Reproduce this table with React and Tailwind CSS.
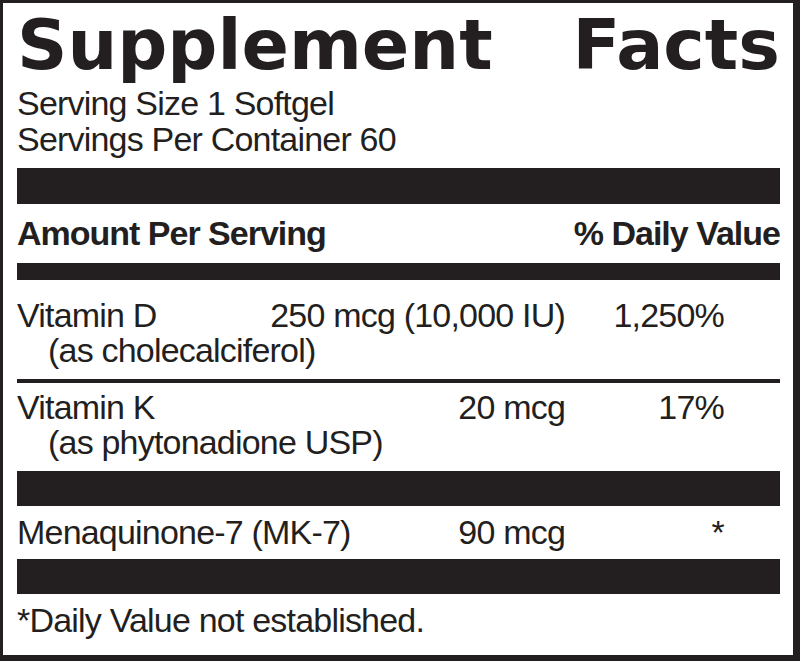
const body = { fontFamily: '"Liberation Sans", Arial, sans-serif' };
const title = { fontFamily: '"DejaVu Sans", "Liberation Sans", sans-serif' };

const Bar = ({ h }) => <div className={`bg-[#231f20] ${h}`} />;

const Row = ({ name, sub, amount, dv, className }) => (
  <div className={className}>
    <div className="flex h-[35px] items-center leading-[35px]">
      <div className="flex-1">{name}</div>
      <div className="text-right">{amount}</div>
      <div className="w-[159px] text-right">{dv}</div>
      <div className="w-[56px]" />
    </div>
    {sub ? <div className="h-[35px] pl-[31px] leading-[35px]">{sub}</div> : null}
  </div>
);

export default function App() {
  return (
    <div className="h-[661px] w-[800px] bg-[#231f20] pb-[6px] pl-[3px] pr-[7px] pt-[3px]">
      <div className="flex h-full flex-col bg-white pl-[14px] pr-[13px] text-[34px] tracking-[-0.8px] text-[#231f20]" style={body}>
        <div className="mt-[7px] flex h-[70px] justify-between text-[70px] font-bold leading-[70px] tracking-normal" style={title}>
          <span>Supplement</span>
          <span>Facts</span>
        </div>
        <div className="mt-[5px] h-[36px] leading-[36px]">Serving Size 1 Softgel</div>
        <div className="h-[36px] leading-[36px]">Servings Per Container 60</div>
        <div className="mt-[11px]">
          <Bar h="h-[36px]" />
        </div>
        <div className="flex h-[59px] items-center justify-between font-bold leading-[59px] tracking-[-1px]">
          <span>Amount Per Serving</span>
          <span>% Daily Value</span>
        </div>
        <Bar h="h-[17px]" />
        <Row
          className="pt-[18px] pb-[11px]"
          name="Vitamin D"
          sub="(as cholecalciferol)"
          amount="250 mcg (10,000 IU)"
          dv="1,250%"
        />
        <Bar h="h-[4px]" />
        <Row
          className="pt-[7px] pb-[11px]"
          name="Vitamin K"
          sub="(as phytonadione USP)"
          amount="20 mcg"
          dv="17%"
        />
        <Bar h="h-[35px]" />
        <Row className="py-[9px]" name="Menaquinone-7 (MK-7)" amount="90 mcg" dv="*" />
        <Bar h="h-[35px]" />
        <div className="flex-1 pt-[6px] leading-[40px]">*Daily Value not established.</div>
      </div>
    </div>
  );
}
